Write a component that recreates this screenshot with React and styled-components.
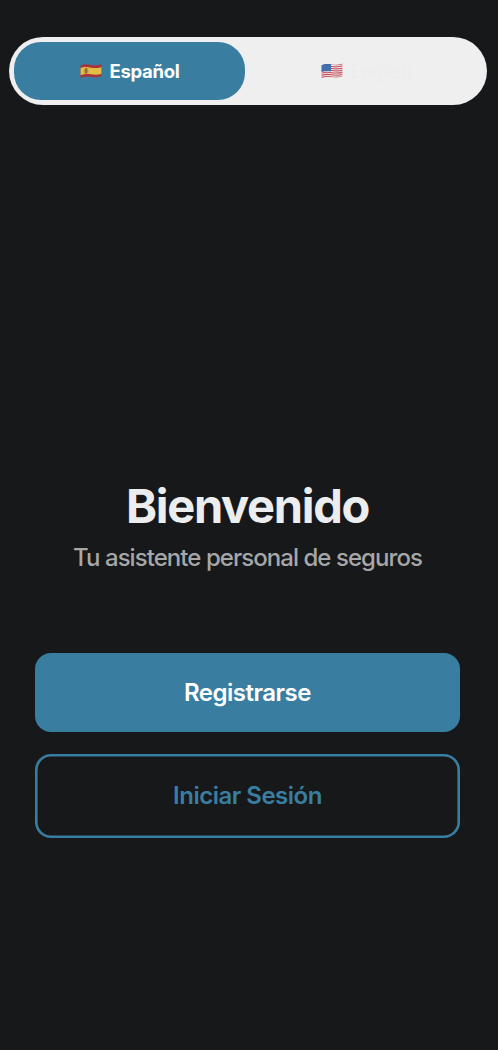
import { useState } from "react";
import styled, { createGlobalStyle } from "styled-components";

const GlobalStyle = createGlobalStyle`
  * {
    box-sizing: border-box;
  }
  body {
    margin: 0;
    background-color: #17181a;
    font-family: Inter, "Liberation Sans", sans-serif;
  }
  h1, p {
    margin: 0;
  }
  button {
    font-family: inherit;
    cursor: pointer;
  }
`;

const Screen = styled.main`
  display: flex;
  flex-direction: column;
  width: 100%;
  min-height: 1050px;
  padding: 37px 11px 0 8.5px;
`;

const LanguageBar = styled.div`
  display: flex;
  height: 68px;
  padding: 5px;
  border-radius: 34px;
  background-color: #efefef;
`;

const LanguageBtn = styled.button`
  display: flex;
  flex: ${({ $active }) => ($active ? "0 0 231.5px" : "1")};
  align-items: center;
  justify-content: center;
  gap: 7.5px;
  padding: 0 0 1px 1px;
  border: none;
  border-radius: 27px;
  color: ${({ $active }) => ($active ? "#ffffff" : "#ecedee")};
  background-color: ${({ $active }) => ($active ? "#397ea1" : "transparent")};
  font-size: 18.5px;
  font-weight: ${({ $active }) => ($active ? 700 : 500)};
  line-height: 24px;
  letter-spacing: ${({ $active }) => ($active ? "-0.3px" : "-0.3px")};

  & + & {
    margin-left: 5px;
  }
`;

const FlagIcon = styled.svg`
  display: block;
  width: 22px;
  height: 16px;
`;

const Contents = styled.section`
  display: flex;
  flex-direction: column;
  margin-top: 371.5px;
  padding: 0 27px 0 26.5px;
  text-align: center;
`;

const Title = styled.h1`
  color: #ecedee;
  font-size: 47px;
  font-weight: 720;
  line-height: 58px;
  letter-spacing: -1.3px;
`;

const Subtitle = styled.p`
  margin-top: 7.5px;
  color: #a5a7a9;
  font-size: 24px;
  font-weight: 450;
  line-height: 32px;
  letter-spacing: -0.95px;
  white-space: nowrap;
`;

const ButtonList = styled.div`
  display: flex;
  flex-direction: column;
  gap: 21.5px;
  margin-top: 79px;
`;

const ActionBtn = styled.button`
  height: ${({ $outline }) => ($outline ? "84px" : "79px")};
  padding: 0 0 1px;
  border: none;
  border-radius: 16px;
  color: ${({ $outline }) => ($outline ? "#397ea1" : "#ffffff")};
  background-color: ${({ $outline }) => ($outline ? "transparent" : "#397ea1")};
  box-shadow: ${({ $outline }) =>
    $outline ? "inset 0 0 0 2.6px #397ea1" : "none"};
  font-size: 24px;
  font-weight: 600;
  letter-spacing: -0.5px;
`;

function SpainFlag() {
  return (
    <FlagIcon viewBox="0 0 22 16" aria-hidden="true">
      <defs>
        <clipPath id="flag-es">
          <path d="M.6 2.500C4 .9 7.500 1.200 11 1.900s7 .6 10.400-.6v12C18 14.600 14.500 14.600 11 14.100S4 13.600 .6 14.900Z" />
        </clipPath>
      </defs>
      <g clipPath="url(#flag-es)">
        <rect width="22" height="16" fill="#a9343c" />
        <path d="M0 5.300C4 3.500 7.500 4 11 4.700s7 .4 11-.8v6.900c-4 1.300-7.500 1-11 .5s-7-.2-11 .9Z" fill="#e3be42" />
        <path d="M4.600 6.200h3v3.200c0 1.700-3 1.700-3 0Z" fill="#a96238" />
        <path d="M5 5.300h2.200v1H5Z" fill="#984636" />
        <path d="M4 6.500v3.700M8.200 6.300V10" stroke="#a59472" strokeWidth=".6" />
      </g>
    </FlagIcon>
  );
}

function UsaFlag() {
  return (
    <FlagIcon viewBox="0 0 22 16" aria-hidden="true">
      <defs>
        <clipPath id="flag-us">
          <path d="M.6 2.300C4 .7 7.500 1 11 1.500s7 .2 10.400-1v12.700C18 14.600 14.500 14.600 11 14.300S4 14 .6 15.300Z" />
        </clipPath>
      </defs>
      <g clipPath="url(#flag-us)">
        <rect width="22" height="16" fill="#eadfe2" />
        {[1.8, 3.9, 6, 8.1, 10.2, 12.3, 14.4].map((y) => (
          <path
            key={y}
            d={`M0 ${y}q5.500-1.500 11-.5t11-.6`}
            fill="none"
            stroke="#c9525f"
            strokeWidth="1.050"
          />
        ))}
        <path d="M0 0h10v8.200Q5 7.500 0 9Z" fill="#3e6dab" />
        <path d="M1.500 3.500h8M1.500 5.200h8M1.500 6.900h8" stroke="#7798c5" strokeWidth=".4" strokeDasharray=".5 1" />
      </g>
    </FlagIcon>
  );
}

function App() {
  const [language, setLanguage] = useState("es");

  return (
    <>
      <GlobalStyle />
      <Screen>
        <LanguageBar>
          <LanguageBtn
            type="button"
            $active={language === "es"}
            onClick={() => setLanguage("es")}
          >
            <SpainFlag />
            Español
          </LanguageBtn>
          <LanguageBtn
            type="button"
            $active={language === "en"}
            onClick={() => setLanguage("en")}
          >
            <UsaFlag />
            English
          </LanguageBtn>
        </LanguageBar>
        <Contents>
          <Title>Bienvenido</Title>
          <Subtitle>Tu asistente personal de seguros</Subtitle>
          <ButtonList>
            <ActionBtn type="button">Registrarse</ActionBtn>
            <ActionBtn type="button" $outline>
              Iniciar Sesión
            </ActionBtn>
          </ButtonList>
        </Contents>
      </Screen>
    </>
  );
}

export default App;
